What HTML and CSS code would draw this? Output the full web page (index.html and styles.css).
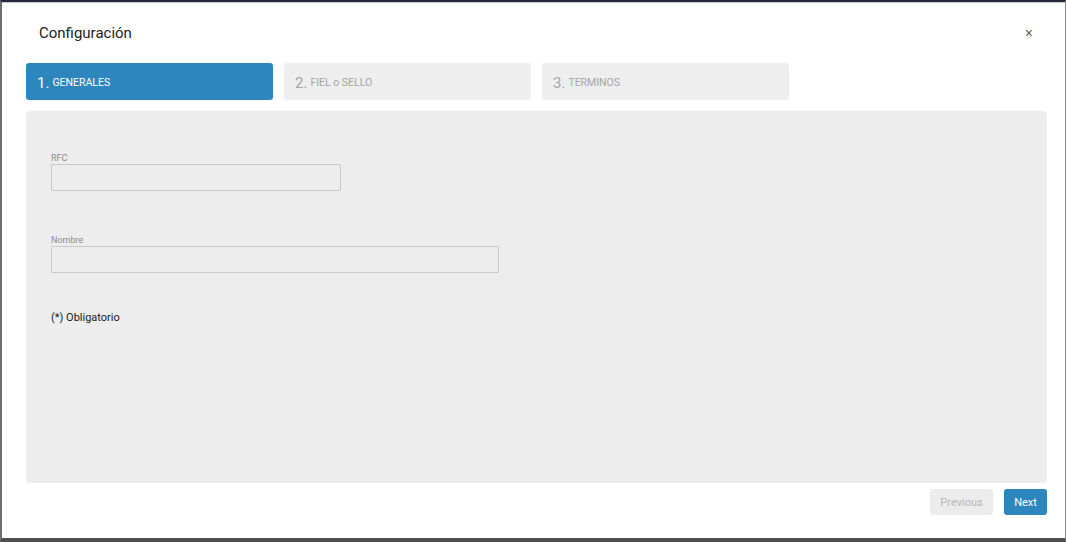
FILE: index.html
```html
<!DOCTYPE html>
<html lang="es">
<head>
<meta charset="utf-8">
<title>Configuración</title>
<link rel="stylesheet" href="styles.css">
</head>
<body>
<div class="frame">
  <div class="modal">
    <div class="header">
      <h1 class="title">Configuración</h1>
      <button class="close" aria-label="Cerrar">×</button>
    </div>
    <div class="steps">
      <div class="step active"><span class="num">1.</span> GENERALES</div>
      <div class="step"><span class="num">2.</span> FIEL o SELLO</div>
      <div class="step"><span class="num">3.</span> TERMINOS</div>
    </div>
    <div class="panel">
      <div class="field rfc">
        <label class="label">RFC</label>
        <div class="input"></div>
      </div>
      <div class="field nombre">
        <label class="label">Nombre</label>
        <div class="input"></div>
      </div>
      <p class="note">(*) Obligatorio</p>
    </div>
    <div class="actions">
      <button class="btn prev">Previous</button>
      <button class="btn next">Next</button>
    </div>
  </div>
</div>
</body>
</html>
```
FILE: styles.css
```css
* { box-sizing: border-box; }
html, body { margin: 0; padding: 0; }
body {
  width: 1066px;
  height: 542px;
  overflow: hidden;
  font-family: Roboto, "Liberation Sans", sans-serif;
  background: #fff;
}
.frame {
  width: 1066px;
  height: 542px;
  border-top: 2px solid #23283a;
  border-left: 2px solid #6d6d6d;
  border-right: 1px solid #8a8a8a;
  border-bottom: 4px solid #505050;
  box-shadow: inset 0 1px 0 #c8c8cc;
}
.modal {
  padding: 0 18px 0 24px;
}
.header {
  display: flex;
  align-items: center;
  justify-content: space-between;
  height: 61px;
  padding: 0 0 0 13px;
}
.title {
  margin: 0;
  font-size: 15px;
  font-weight: 400;
  color: #1c1c1c;
  padding-top: 0;
}
.close {
  border: 0;
  background: none;
  font-size: 14px;
  color: #555;
  padding: 0;
  margin-right: 14px;
  margin-top: 0;
  cursor: pointer;
  font-family: "Liberation Sans", sans-serif;
}
.steps {
  display: flex;
  gap: 11px;
  height: 37px;
}
.step {
  width: 247px;
  height: 37px;
  border-radius: 3px;
  background: #eeeeee;
  color: #a5a5a5;
  font-size: 10.5px;
  font-weight: 400;
  display: flex;
  align-items: center;
  gap: 3px;
  padding-left: 11px;
  padding-top: 2px;
}
.step .num { font-size: 15px; font-weight: 400; }
.step.active {
  background: #2d86bd;
  color: #fff;
}
.panel {
  margin-top: 11px;
  height: 372px;
  background: #ededed;
  border-radius: 4px;
  padding: 42px 25px 0;
}
.field { display: flex; flex-direction: column; }
.label {
  font-size: 9px;
  color: #8c8c8c;
  line-height: 11px;
  margin-bottom: 0;
}
.input {
  height: 27px;
  border: 1px solid #c9c9c9;
  border-radius: 1px;
  background: #ededed;
}
.rfc .input { width: 290px; }
.nombre { margin-top: 44px; }
.nombre .input { width: 448px; }
.note {
  margin: 38px 0 0;
  font-size: 11px;
  color: #1a1a1a;
}
.actions {
  display: flex;
  justify-content: flex-end;
  gap: 11px;
  margin-top: 6px;
}
.btn {
  height: 26px;
  border: 0;
  border-radius: 3px;
  font-family: Roboto, "Liberation Sans", sans-serif;
  font-size: 11px;
  padding: 0 8px;
}
.btn.prev { background: #ececec; color: #b5b5b5; width: 63px; }
.btn.next { background: #2d86bd; color: #fff; width: 43px; }
```
